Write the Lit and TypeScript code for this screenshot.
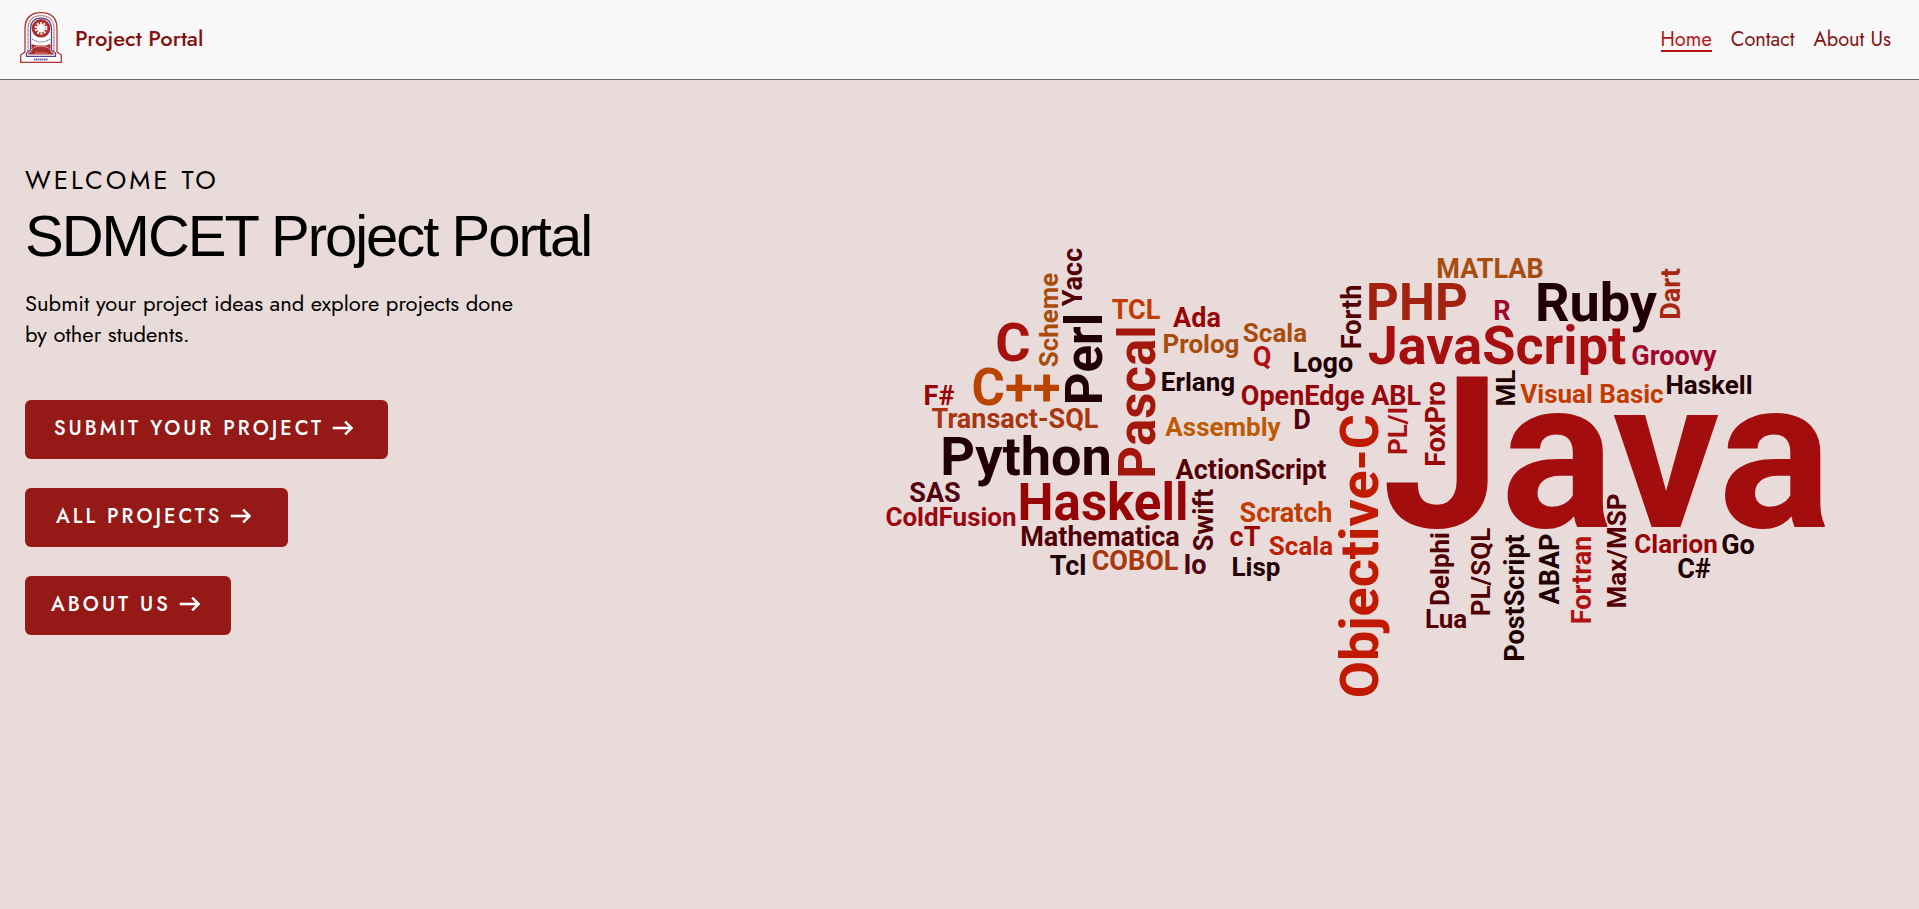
import { LitElement, html, svg, css } from "lit";
import { customElement } from "lit/decorators.js";

type Size = "xs" | "s" | "m" | "l" | "xl";
/** label, colour, size, centre along the text, baseline, upright (reads bottom to top) */
type Word = [string, string, Size, number, number, boolean?];

const INK = "#210004";
const WINE = "#520005";
const PLUM = "#520010";
const RED = "#970507";
const CRIMSON = "#a60e0f";
const RUST = "#a8360f";
const BRONZE = "#a84d0e";
const ORANGE = "#c23b03";
const ROSE = "#a0052c";

const WORDS: Word[] = [
  ["Java", "#a30d0d", "xl", 1607, 527],
  ["C", "#a5120d", "l", 1013, 361],
  ["C++", "#bb4400", "m", 1016, 405],
  ["Python", INK, "l", 1026, 475],
  ["Haskell", RED, "m", 1103, 520],
  ["PHP", "#a3220f", "m", 1417, 320],
  ["Ruby", INK, "l", 1596, 321],
  ["JavaScript", CRIMSON, "l", 1497, 364],
  ["Perl", INK, "m", 359, 1102, true],
  ["Pascal", "#a3170d", "m", 402, 1155, true],
  ["Objective-C", "#c01a02", "l", 556, 1378, true],
  ["F#", RED, "s", 939, 405],
  ["TCL", ORANGE, "s", 1136, 319],
  ["Transact-SQL", RUST, "s", 1015, 428],
  ["SAS", PLUM, "s", 935, 502],
  ["ColdFusion", "#9c0610", "xs", 951, 526],
  ["Mathematica", WINE, "s", 1100, 546],
  ["Tcl", INK, "s", 1068, 575],
  ["COBOL", RUST, "s", 1135, 570],
  ["Io", PLUM, "s", 1195, 574],
  ["Ada", RED, "s", 1197, 327],
  ["Prolog", BRONZE, "xs", 1201, 353],
  ["Scala", BRONZE, "xs", 1275, 342],
  ["Q", "#b01212", "s", 1262, 366],
  ["Logo", INK, "s", 1323, 372],
  ["Erlang", INK, "xs", 1198, 391],
  ["OpenEdge ABL", "#97060c", "s", 1331, 405],
  ["Assembly", "#c05a02", "xs", 1223, 436],
  ["D", PLUM, "s", 1302, 429],
  ["ActionScript", WINE, "s", 1251, 479],
  ["Scratch", ORANGE, "s", 1286, 522],
  ["cT", RED, "s", 1245, 546],
  ["Scala", "#c01f05", "xs", 1301, 555],
  ["Lisp", INK, "xs", 1256, 576],
  ["MATLAB", BRONZE, "s", 1490, 278],
  ["R", ROSE, "s", 1502, 320],
  ["Visual Basic", ORANGE, "xs", 1592, 403],
  ["Groovy", ROSE, "s", 1674, 365],
  ["Haskell", INK, "xs", 1709, 394],
  ["Lua", WINE, "xs", 1446, 628],
  ["Clarion", RED, "xs", 1676, 553],
  ["Go", INK, "s", 1738, 554],
  ["C#", INK, "s", 1694, 578],
  ["Scheme", BRONZE, "xs", 320, 1058, true],
  ["Yacc", WINE, "s", 277, 1082, true],
  ["Swift", WINE, "s", 520, 1213, true],
  ["Forth", WINE, "s", 317, 1361, true],
  ["PL/I", "#a80f12", "xs", 431, 1407, true],
  ["FoxPro", RED, "s", 424, 1445, true],
  ["ML", INK, "xs", 388, 1515, true],
  ["Dart", "#a8270f", "s", 294, 1680, true],
  ["Delphi", WINE, "xs", 569, 1449, true],
  ["PL/SQL", WINE, "xs", 572, 1490, true],
  ["PostScript", INK, "s", 598, 1524, true],
  ["ABAP", INK, "s", 569, 1559, true],
  ["Fortran", "#b01212", "s", 580, 1591, true],
  ["Max/MSP", WINE, "xs", 551, 1626, true],
];

@customElement("word-cloud")
export class WordCloud extends LitElement {
  static styles = css`
    :host { display: block; }
    .cloud { display: block; width: 100%; height: auto; overflow: visible; }
    .word { font-family: Roboto, "Liberation Sans", sans-serif; font-weight: 700; text-anchor: middle; }
    .xs { font-size: 26px; }
    .s { font-size: 27px; }
    .m { font-size: 51px; }
    .l { font-size: 54px; }
    .xl { font-size: 212px; }
  `;

  render() {
    return html`
      <svg class="cloud" viewBox="880 240 950 470" role="img" aria-label="Programming languages">
        ${WORDS.map(([label, colour, size, along, base, upright]) =>
          upright
            ? svg`<text class="word ${size}" fill=${colour} transform="translate(${base} ${along}) rotate(-90)">${label}</text>`
            : svg`<text class="word ${size}" fill=${colour} x=${along} y=${base}>${label}</text>`
        )}
      </svg>
    `;
  }
}

@customElement("app-root")
export class AppRoot extends LitElement {
  static styles = css`
    :host {
      display: flex;
      flex-direction: column;
      min-height: 100vh;
      background: #e9dbda;
      color: #000;
      font-family: Jost, Lato, sans-serif;
    }
    .bar {
      display: flex;
      align-items: center;
      justify-content: space-between;
      box-sizing: border-box;
      min-height: 80px;
      padding: 0 28px 0 20px;
      background: #f8f8f8;
      border-bottom: 1px solid #6c6565;
    }
    .brand {
      display: flex;
      align-items: center;
      gap: 13px;
      padding-bottom: 4px;
      color: #831313;
      font-size: 22px;
      font-weight: 500;
      text-decoration: none;
    }
    .crest { display: block; width: 42px; height: 51px; }
    .nav { display: flex; gap: 19px; margin-top: 2px; }
    .link {
      color: #831313;
      font-size: 20px;
      line-height: 21px;
      text-decoration: none;
      border-bottom: 2px solid transparent;
    }
    .link.active { color: #b91515; border-color: #b91515; }
    .hero {
      display: grid;
      grid-template-columns: minmax(0, 9fr) minmax(0, 10fr);
      padding: 84px 89px 0 25px;
    }
    .eyebrow { margin: 0; font-size: 26px; line-height: 32px; letter-spacing: 3px; }
    .title {
      margin: 8px 0 0;
      font-family: Arial, "Liberation Sans", sans-serif;
      font-size: 58px;
      line-height: 64px;
      font-weight: 400;
      letter-spacing: -2px;
    }
    .lead { margin: 20px 0 0; max-width: 505px; font-size: 22px; line-height: 31px; }
    .actions { display: flex; flex-direction: column; align-items: flex-start; gap: 29px; margin-top: 50px; }
    .action {
      display: flex;
      align-items: center;
      gap: 7px;
      min-height: 59px;
      padding: 0 33px 3px 29px;
      border: 0;
      border-radius: 6px;
      background: #941917;
      color: #fff;
      font: inherit;
      font-size: 20px;
      font-weight: 500;
      letter-spacing: 3px;
      text-transform: uppercase;
      cursor: pointer;
    }
    .action.wide { padding-left: 31px; padding-right: 35px; }
    .action.narrow { padding-left: 26px; padding-right: 29px; }
    .arrow { display: block; width: 24px; height: 24px; fill: currentColor; stroke: currentColor; stroke-width: 0.6; }
    .art { padding-top: 76px; }
  `;

  private crest() {
    return html`
      <svg class="crest" viewBox="0 0 42 51" aria-hidden="true">
        <path d="M5 40V17C5 6 11 .7 21 .7S37 6 37 17v23l4.300 3v7.300H.7V43z" fill="#fff" stroke="#b23431" stroke-width="1.300" />
        <path d="M8 39V18C8 9 12 3.700 21 3.700S34 9 34 18v21" fill="none" stroke="#a3474a" stroke-width="1.300" stroke-dasharray="1 .6" />
        <path d="M6.500 44.300V41L10.500 38V18C10.500 10 14 6.200 21 6.200S31.500 10 31.500 18v20l4 3v3.300z" fill="#fff" stroke="#51449a" stroke-width="1.300" />
        <circle cx="21" cy="16.300" r="9.300" fill="#ad2f2b" />
        <circle cx="21" cy="16.300" r="5.400" fill="none" stroke="#fff" stroke-width="2" stroke-dasharray="2 1.400" />
        <circle cx="21" cy="16.300" r="4.200" fill="#fff" />
        <path d="M12 27q9 6 18 0" fill="none" stroke="#7a74ad" stroke-width="1.200" stroke-dasharray="1.400 .6" />
        <path d="M11.500 32l5 1.500h9l5-1.500v6l4 4.600H7.500l4-4.600z" fill="#ad2f2b" />
        <path d="M10 41q2-7 11-7t11 7" fill="none" stroke="#e4b7b5" stroke-width=".8" />
        <path d="M15 41h12" stroke="#dba6a4" stroke-dasharray="1.500 .6" />
        <path d="M14 47.500h14" stroke="#6a60a5" stroke-width="1.800" stroke-dasharray="1.500 .5" />
      </svg>
    `;
  }

  private action(label: string, variant = "") {
    return html`
      <button class="action ${variant}" type="button">
        <span>${label}</span>
        <svg class="arrow" viewBox="0 0 24 24" aria-hidden="true">
          <path d="M15 5l-1.410 1.410L18.170 11H2v2h16.170l-4.590 4.590L15 19l7-7-7-7z" />
        </svg>
      </button>
    `;
  }

  render() {
    return html`
      <header class="bar">
        <a class="brand" href="#home">${this.crest()}<span>Project Portal</span></a>
        <nav class="nav">
          <a class="link active" href="#home" aria-current="page">Home</a>
          <a class="link" href="#contact">Contact</a>
          <a class="link" href="#about">About Us</a>
        </nav>
      </header>
      <main class="hero">
        <section>
          <p class="eyebrow">WELCOME TO</p>
          <h1 class="title">SDMCET Project Portal</h1>
          <p class="lead">Submit your project ideas and explore projects done by other students.</p>
          <div class="actions">
            ${this.action("Submit your project")} ${this.action("All projects", "wide")}
            ${this.action("About us", "narrow")}
          </div>
        </section>
        <word-cloud class="art"></word-cloud>
      </main>
    `;
  }
}
